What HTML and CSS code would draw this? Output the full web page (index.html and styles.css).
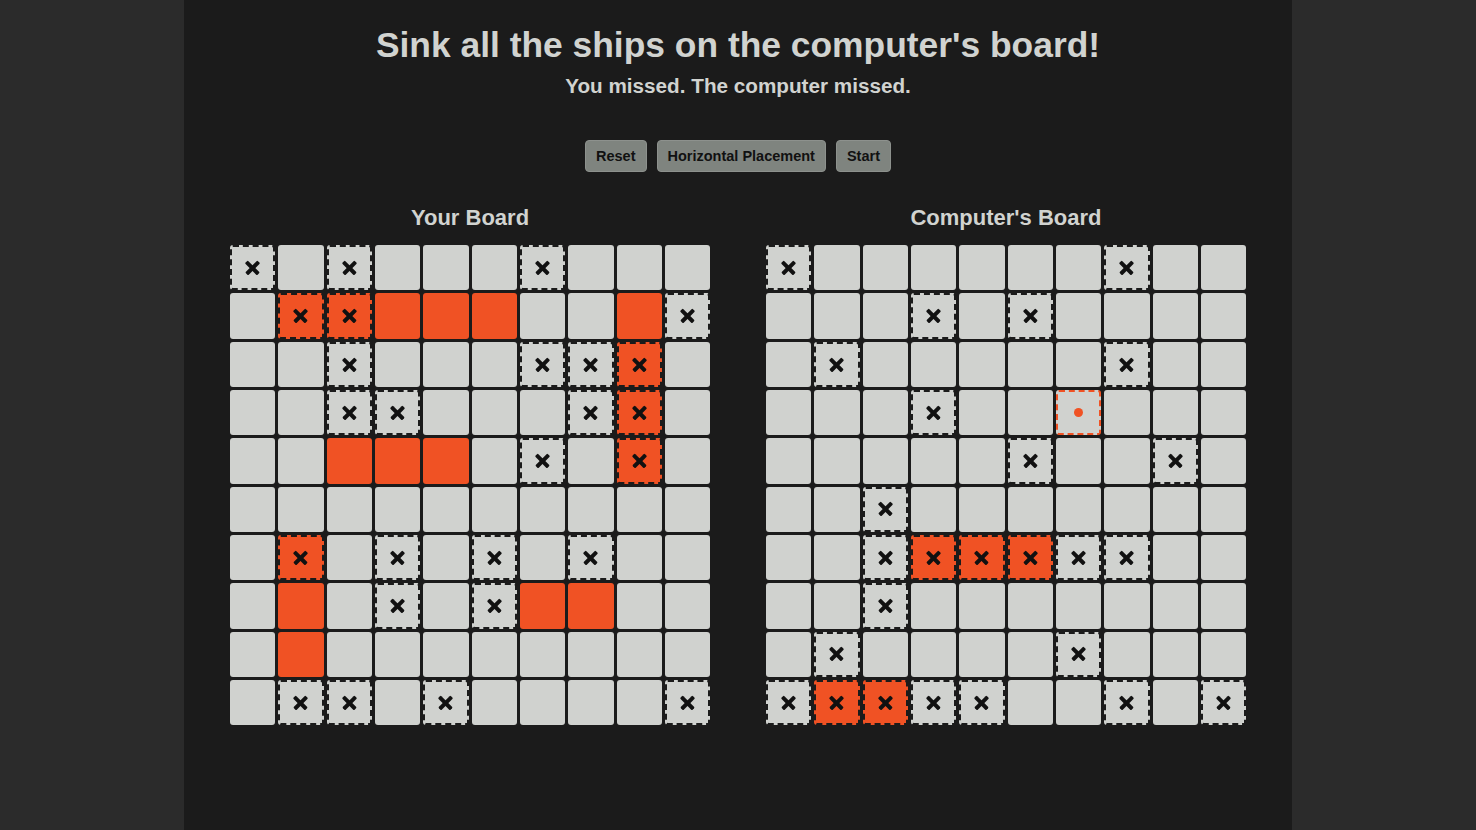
FILE: index.html
```html
<!DOCTYPE html>
<html lang="en">
<head>
<meta charset="utf-8">
<title>Battleship</title>
<link rel="stylesheet" href="styles.css">
</head>
<body>
<div class="app">
  <h1 class="title">Sink all the ships on the computer's board!</h1>
  <p class="status">You missed. The computer missed.</p>
  <div class="controls">
    <button class="btn">Reset</button>
    <button class="btn">Horizontal Placement</button>
    <button class="btn">Start</button>
  </div>
  <div class="boards">
    <section class="board">
      <h2 class="board-title">Your Board</h2>
      <div class="grid">
        <div class="cell miss"></div><div class="cell"></div><div class="cell miss"></div><div class="cell"></div><div class="cell"></div><div class="cell"></div><div class="cell miss"></div><div class="cell"></div><div class="cell"></div><div class="cell"></div>
        <div class="cell"></div><div class="cell ship miss"></div><div class="cell ship miss"></div><div class="cell ship"></div><div class="cell ship"></div><div class="cell ship"></div><div class="cell"></div><div class="cell"></div><div class="cell ship"></div><div class="cell miss"></div>
        <div class="cell"></div><div class="cell"></div><div class="cell miss"></div><div class="cell"></div><div class="cell"></div><div class="cell"></div><div class="cell miss"></div><div class="cell miss"></div><div class="cell ship miss"></div><div class="cell"></div>
        <div class="cell"></div><div class="cell"></div><div class="cell miss"></div><div class="cell miss"></div><div class="cell"></div><div class="cell"></div><div class="cell"></div><div class="cell miss"></div><div class="cell ship miss"></div><div class="cell"></div>
        <div class="cell"></div><div class="cell"></div><div class="cell ship"></div><div class="cell ship"></div><div class="cell ship"></div><div class="cell"></div><div class="cell miss"></div><div class="cell"></div><div class="cell ship miss"></div><div class="cell"></div>
        <div class="cell"></div><div class="cell"></div><div class="cell"></div><div class="cell"></div><div class="cell"></div><div class="cell"></div><div class="cell"></div><div class="cell"></div><div class="cell"></div><div class="cell"></div>
        <div class="cell"></div><div class="cell ship miss"></div><div class="cell"></div><div class="cell miss"></div><div class="cell"></div><div class="cell miss"></div><div class="cell"></div><div class="cell miss"></div><div class="cell"></div><div class="cell"></div>
        <div class="cell"></div><div class="cell ship"></div><div class="cell"></div><div class="cell miss"></div><div class="cell"></div><div class="cell miss"></div><div class="cell ship"></div><div class="cell ship"></div><div class="cell"></div><div class="cell"></div>
        <div class="cell"></div><div class="cell ship"></div><div class="cell"></div><div class="cell"></div><div class="cell"></div><div class="cell"></div><div class="cell"></div><div class="cell"></div><div class="cell"></div><div class="cell"></div>
        <div class="cell"></div><div class="cell miss"></div><div class="cell miss"></div><div class="cell"></div><div class="cell miss"></div><div class="cell"></div><div class="cell"></div><div class="cell"></div><div class="cell"></div><div class="cell miss"></div>
      </div>
    </section>
    <section class="board">
      <h2 class="board-title">Computer's Board</h2>
      <div class="grid">
        <div class="cell miss"></div><div class="cell"></div><div class="cell"></div><div class="cell"></div><div class="cell"></div><div class="cell"></div><div class="cell"></div><div class="cell miss"></div><div class="cell"></div><div class="cell"></div>
        <div class="cell"></div><div class="cell"></div><div class="cell"></div><div class="cell miss"></div><div class="cell"></div><div class="cell miss"></div><div class="cell"></div><div class="cell"></div><div class="cell"></div><div class="cell"></div>
        <div class="cell"></div><div class="cell miss"></div><div class="cell"></div><div class="cell"></div><div class="cell"></div><div class="cell"></div><div class="cell"></div><div class="cell miss"></div><div class="cell"></div><div class="cell"></div>
        <div class="cell"></div><div class="cell"></div><div class="cell"></div><div class="cell miss"></div><div class="cell"></div><div class="cell"></div><div class="cell target"><span class="dot"></span></div><div class="cell"></div><div class="cell"></div><div class="cell"></div>
        <div class="cell"></div><div class="cell"></div><div class="cell"></div><div class="cell"></div><div class="cell"></div><div class="cell miss"></div><div class="cell"></div><div class="cell"></div><div class="cell miss"></div><div class="cell"></div>
        <div class="cell"></div><div class="cell"></div><div class="cell miss"></div><div class="cell"></div><div class="cell"></div><div class="cell"></div><div class="cell"></div><div class="cell"></div><div class="cell"></div><div class="cell"></div>
        <div class="cell"></div><div class="cell"></div><div class="cell miss"></div><div class="cell ship miss"></div><div class="cell ship miss"></div><div class="cell ship miss"></div><div class="cell miss"></div><div class="cell miss"></div><div class="cell"></div><div class="cell"></div>
        <div class="cell"></div><div class="cell"></div><div class="cell miss"></div><div class="cell"></div><div class="cell"></div><div class="cell"></div><div class="cell"></div><div class="cell"></div><div class="cell"></div><div class="cell"></div>
        <div class="cell"></div><div class="cell miss"></div><div class="cell"></div><div class="cell"></div><div class="cell"></div><div class="cell"></div><div class="cell miss"></div><div class="cell"></div><div class="cell"></div><div class="cell"></div>
        <div class="cell miss"></div><div class="cell ship miss"></div><div class="cell ship miss"></div><div class="cell miss"></div><div class="cell miss"></div><div class="cell"></div><div class="cell"></div><div class="cell miss"></div><div class="cell"></div><div class="cell miss"></div>
      </div>
    </section>
  </div>
</div>
</body>
</html>
```

FILE: styles.css
```css
html, body {
  margin: 0;
  padding: 0;
  background: #2b2b2b;
}

body {
  font-family: "Liberation Sans", Arial, sans-serif;
  color: #d1d3d0;
}

.app {
  width: 1108px;
  min-height: 830px;
  margin: 0 auto;
  background: #1b1b1b;
  text-align: center;
  padding-top: 25px;
  box-sizing: border-box;
}

.title {
  margin: 0;
  font-size: 35.4px;
  line-height: 40px;
  font-weight: bold;
}

.status {
  margin: 9px 0 0;
  font-size: 20.7px;
  line-height: 24px;
  font-weight: bold;
}

.controls {
  display: flex;
  justify-content: center;
  gap: 10px;
  margin-top: 42px;
}

.btn {
  height: 32px;
  padding: 0 10px;
  background: #7f847f;
  border: 1px solid #8d918d;
  border-radius: 4px;
  color: #111;
  font-family: "Liberation Sans", Arial, sans-serif;
  font-size: 14.5px;
  font-weight: bold;
}

.boards {
  display: flex;
  justify-content: center;
  gap: 56px;
  margin-top: 33px;
}

.board {
  width: 480px;
}

.board-title {
  margin: 0 0 14px;
  font-size: 22px;
  line-height: 26px;
  font-weight: bold;
}

.grid {
  display: grid;
  grid-template-columns: repeat(10, 1fr);
  gap: 3px;
}

.cell {
  aspect-ratio: 1;
  background: #d0d2cf;
  border-radius: 3px;
  box-sizing: border-box;
  display: grid;
  place-items: center;
}

.ship {
  background: #f05224;
}

.miss {
  border: 2px dashed #1b1b1b;
}

.miss::before,
.miss::after {
  content: "";
  grid-area: 1 / 1;
  width: 17px;
  height: 3.5px;
  background: #111;
  border-radius: 1px;
  transform: rotate(45deg);
}

.miss::after {
  transform: rotate(-45deg);
}

.target {
  border: 2px dashed #f05224;
}

.dot {
  width: 9px;
  height: 9px;
  border-radius: 50%;
  background: #f05224;
}
```
